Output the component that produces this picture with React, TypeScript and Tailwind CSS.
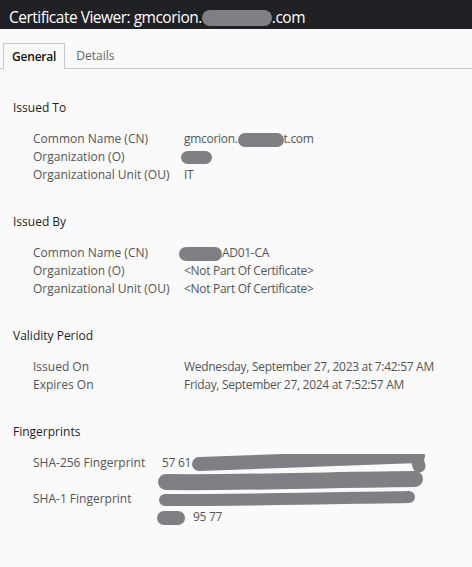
import React from 'react';

const Blob = ({ className }: { className: string }) => (
    <span className={`inline-block rounded-full bg-[#808084] align-middle ${className}`} />
);

interface Row {
    label: string;
    value: React.ReactNode;
}

const Section = ({ title, rows }: { title: string; rows: Row[] }) => (
    <div className="mb-[29px]">
        <div className="h-[18px] leading-[18px] text-[#1f1f1f]">{title}</div>
        <div className="mt-[13px] pl-5">
            {rows.map((r) => (
                <div key={r.label} className="flex h-[18px] leading-[18px] text-[#555]">
                    <div className="w-[151px] shrink-0">{r.label}</div>
                    <div className="whitespace-nowrap tracking-[-0.3px]">{r.value}</div>
                </div>
            ))}
        </div>
    </div>
);

export default function App() {
    return (
        <div className="w-[472px] h-[567px] bg-[#fafafa] text-[12px] overflow-hidden" style={{ fontFamily: '"Open Sans", sans-serif' }}>
            {/* Title bar */}
            <div className="h-[29px] bg-[#202124] pl-[9px] pt-[8px] text-[15.5px] leading-[18px] tracking-[-0.5px] text-white whitespace-nowrap">
                Certificate Viewer: gmcorion.
                <Blob className="w-[70px] h-[16px] -mt-[2px]" />
                .com
            </div>

            {/* Tabs */}
            <div className="mt-[14px] flex h-[26px] border-b border-[#c8c8c8] pl-[3px]">
                <div className="h-[26px] border border-b-0 border-[#c8c8c8] bg-[#fafafa] px-[8px] pt-[1px] leading-[24px] font-semibold tracking-[-0.2px] text-[#111]">
                    General
                </div>
                <div className="px-[11px] pt-[1px] leading-[24px] text-[#666]">Details</div>
            </div>

            {/* Content */}
            <div className="pl-[13px] pt-[30px]">
                <Section
                    title="Issued To"
                    rows={[
                        {
                            label: 'Common Name (CN)',
                            value: (
                                <>
                                    gmcorion.
                                    <Blob className="w-[46px] h-[14px]" />
                                    t.com
                                </>
                            ),
                        },
                        { label: 'Organization (O)', value: <Blob className="w-[31px] h-[13px] -ml-[3px]" /> },
                        { label: 'Organizational Unit (OU)', value: 'IT' },
                    ]}
                />
                <Section
                    title="Issued By"
                    rows={[
                        {
                            label: 'Common Name (CN)',
                            value: (
                                <>
                                    <Blob className="w-[43px] h-[14px] -ml-[5px]" />
                                    AD01-CA
                                </>
                            ),
                        },
                        { label: 'Organization (O)', value: '<Not Part Of Certificate>' },
                        { label: 'Organizational Unit (OU)', value: '<Not Part Of Certificate>' },
                    ]}
                />
                <Section
                    title="Validity Period"
                    rows={[
                        { label: 'Issued On', value: 'Wednesday, September 27, 2023 at 7:42:57 AM' },
                        { label: 'Expires On', value: 'Friday, September 27, 2024 at 7:52:57 AM' },
                    ]}
                />

                {/* Fingerprints */}
                <div>
                    <div className="h-[18px] leading-[18px] text-[#1f1f1f]">Fingerprints</div>
                    <div className="relative mt-[13px] pl-5 text-[#555]">
                        <div className="flex leading-[18px]">
                            <div className="w-[129px] shrink-0">SHA-256 Fingerprint</div>
                            <div>
                                <div className="h-[18px] tracking-[-0.3px]">57 61</div>
                                <div className="h-[18px]" />
                            </div>
                        </div>
                        <div className="flex leading-[18px]">
                            <div className="w-[129px] shrink-0">SHA-1 Fingerprint</div>
                            <div>
                                <div className="h-[18px]" />
                                <div className="h-[18px] -ml-[5px] whitespace-nowrap tracking-[-0.3px]">
                                    <Blob className="w-[28px] h-[14px]" />
                                    <span className="ml-[8px]">95 77</span>
                                </div>
                            </div>
                        </div>
                        {/* redaction scribbles */}
                        <svg className="absolute left-0 top-0 pointer-events-none" width="459" height="60" viewBox="0 0 459 60" fill="none">
                            <g stroke="#808084" strokeLinecap="round">
                                <path d="M186 10 C 250 8, 330 5, 405 2" strokeWidth="14" />
                                <path d="M404 5 L 406 12" strokeWidth="13" />
                                <path d="M153 28 C 230 29, 300 26, 402 25" strokeWidth="16" />
                                <path d="M152 46 C 250 46, 330 44, 396 43" strokeWidth="12" />
                            </g>
                        </svg>
                    </div>
                </div>
            </div>
        </div>
    );
}
